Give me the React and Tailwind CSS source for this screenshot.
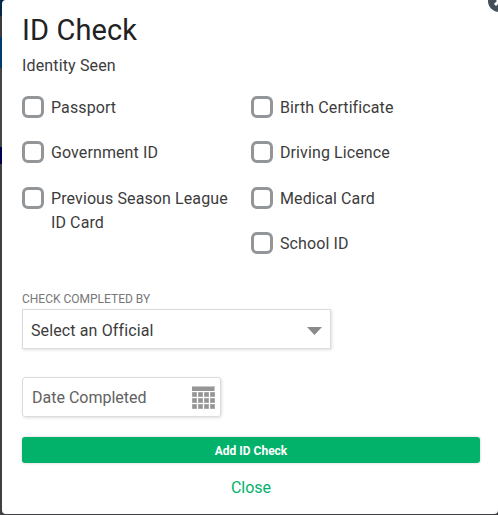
import React from 'react'

const leftOptions = ['Passport', 'Government ID', 'Previous Season League ID Card']
const rightOptions = ['Birth Certificate', 'Driving Licence', 'Medical Card', 'School ID']

function CheckOption({ label }) {
  return (
    <label className="flex items-start gap-[7px] text-base leading-6 tracking-[0.1px]">
      <input type="checkbox" className="mt-px h-[22px] w-[22px] shrink-0 appearance-none rounded-md border-3 border-[#939699] bg-white" />
      <span className="pt-px">{label}</span>
    </label>
  )
}

function CalendarIcon() {
  const cells = [0, 1, 2, 3]
  return (
    <svg width="23" height="23" viewBox="0 0 23 23">
      <rect width="23" height="5" fill="#c8c8c8" />
      <rect y="1" width="22" height="4" fill="#969696" />
      {[6, 12, 18].map((y) =>
        cells.map((c) => (
          <g key={`${y}-${c}`}>
            <rect x={c * 6} y={y} width="5" height="5" fill="#bdbdbd" />
            <rect x={c * 6 + 0.5} y={y + 0.5} width="4" height="4" fill="#949494" />
          </g>
        ))
      )}
    </svg>
  )
}

export default function App() {
  return (
    <div className="relative h-[515px] w-[498px] overflow-hidden bg-[#403f41] pl-0.5 font-[Roboto,sans-serif] text-[#3c3c3c]">
      {/* page showing behind the dialog */}
      <div className="absolute top-0 left-0 w-1">
        <div className="h-4 bg-[#062847]"></div>
        <div className="h-[21px] bg-[#3c3c3e]"></div>
        <div className="h-[31px] bg-[#003a70]"></div>
        <div className="h-[79px] bg-[#454545]"></div>
        <div className="h-[17px] bg-[#000050]"></div>
      </div>

      <div className="relative h-[514px] w-[496px] rounded-[4px] bg-white px-5 pt-[13px]">
        <h1 className="text-[29px] leading-[34px] tracking-[0.1px] text-[#222]">ID Check</h1>
        <p className="mt-[7px] text-base leading-6 tracking-[0.15px]">Identity Seen</p>

        <div className="mt-[17px] flex h-[196px]">
          <div className="flex w-[229px] flex-col gap-[20.33px] pr-5">
            {leftOptions.map((label) => <CheckOption key={label} label={label} />)}
          </div>
          <div className="flex flex-col gap-[20.33px]">
            {rightOptions.map((label) => <CheckOption key={label} label={label} />)}
          </div>
        </div>

        <div className="text-xs leading-4 text-[#777]">CHECK COMPLETED BY</div>
        <button className="mt-0.5 flex h-10 w-[309px] items-center justify-between border border-[#dcdcdc] pr-2 pl-2 text-base tracking-[0.12px] shadow-[1px_1px_3px_rgba(0,0,0,0.13)]">
          <span className="pt-[3px]">Select an Official</span>
          <svg width="15" height="8" viewBox="0 0 15 8" className="mt-1">
            <path d="M0 0h15L7.5 8z" fill="#8a8a8a" />
          </svg>
        </button>

        <button className="mt-7 flex h-10 w-[199px] items-center justify-between rounded-[3px] border border-[#dcdcdc] pr-[5px] pl-[9px] text-base text-[#616161] shadow-[1px_1px_3px_rgba(0,0,0,0.13)]">
          <span className="pt-0.5">Date Completed</span>
          <CalendarIcon />
        </button>

        <button className="mt-5 block h-[26px] w-[458px] rounded-[3px] bg-[#02b26a] pt-0.5 text-xs font-bold text-white shadow-[0_0_3px_rgba(0,0,0,0.2)]">
          Add ID Check
        </button>
        <button className="mt-[13px] block w-[458px] text-base leading-6 text-[#02b26a]">Close</button>
      </div>

      <svg width="22" height="22" viewBox="0 0 22 22" className="absolute -top-2.5 left-[488px]">
        <circle cx="11" cy="11" r="11" fill="#444f59" />
        <path d="M7 7l8 8M15 7l-8 8" stroke="white" strokeWidth="3" />
      </svg>
    </div>
  )
}
